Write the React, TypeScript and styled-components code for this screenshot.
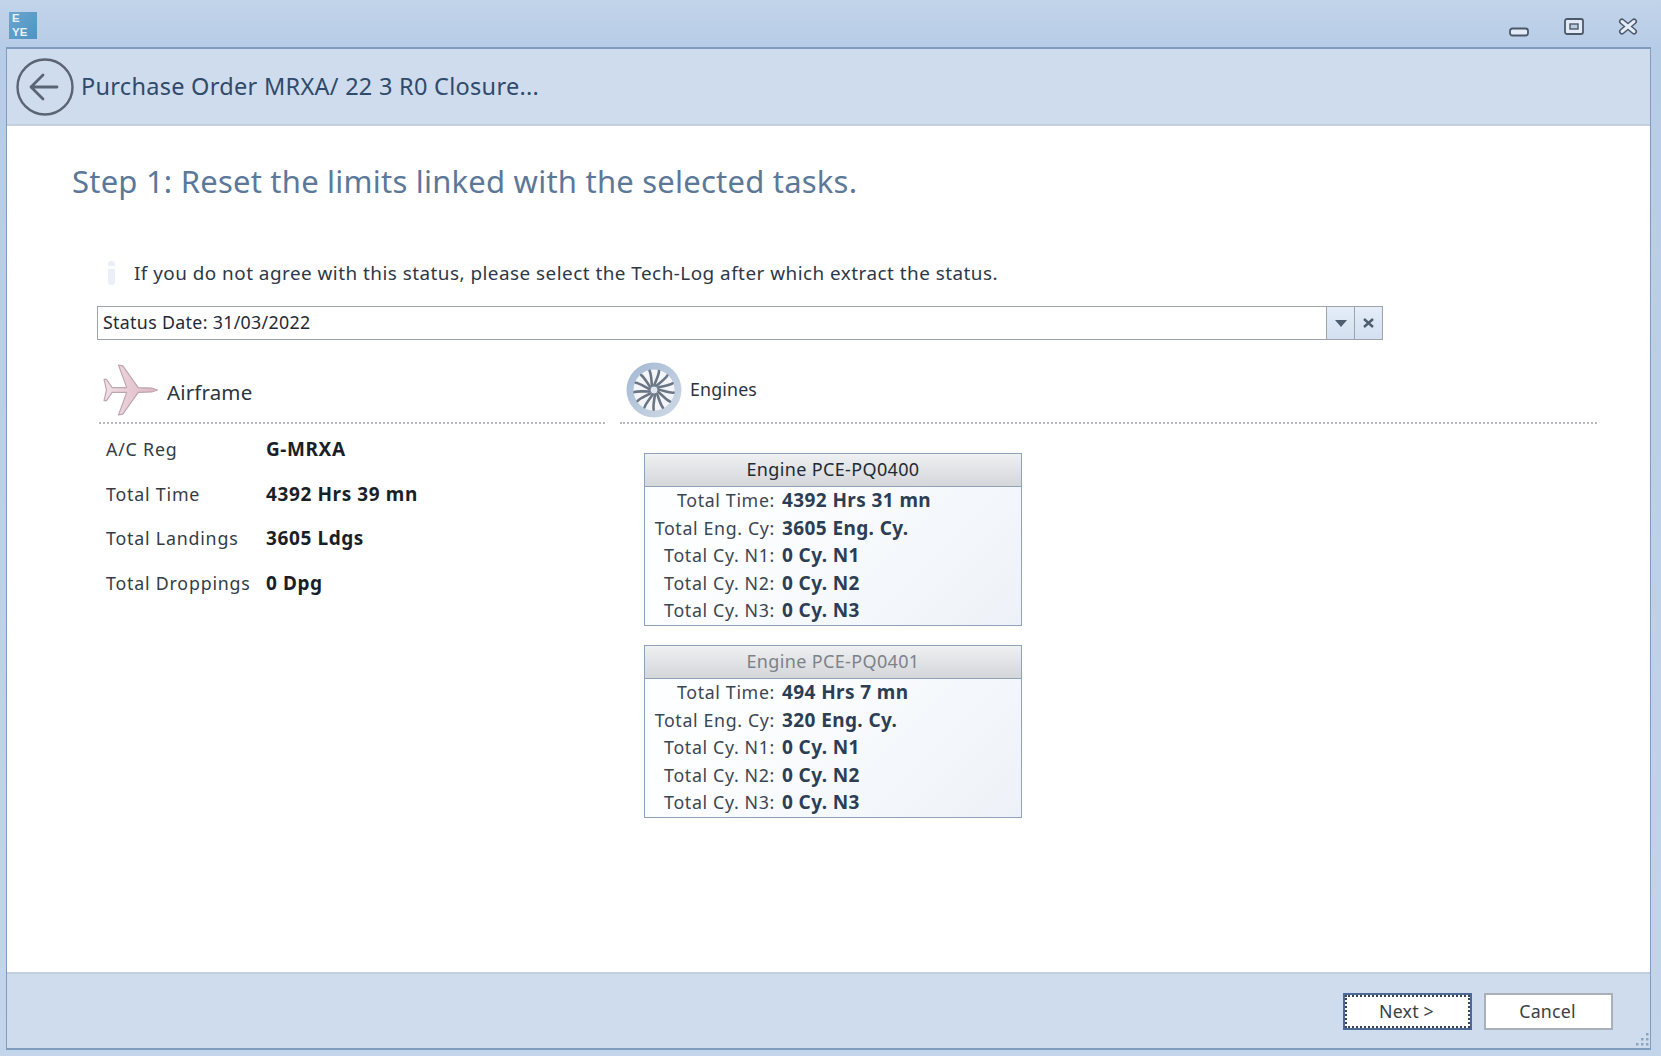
import React from "react";
import styled, { createGlobalStyle } from "styled-components";

const Global = createGlobalStyle`
  html, body { margin: 0; padding: 0; }
  body { font-family: "Noto Sans", "Open Sans", "Liberation Sans", sans-serif; background: #c0d3ea; }
`;

const Win = styled.div`
  width: 1661px; height: 1056px; display: flex; flex-direction: column; overflow: hidden;
  background: linear-gradient(180deg, #c2d4ea 0px, #b7cce7 47px, #c3d5eb 100%);
`;
const TitleBar = styled.div`
  height: 47px; flex: none; box-sizing: border-box; display: flex; align-items: flex-start; justify-content: space-between;
  padding: 12px 23px 0 9px;
`;
const Logo = styled.div`
  width: 28px; height: 27px; background: linear-gradient(135deg, #6aa6cf, #4f93c2); display: flex; flex-direction: column;
  color: #e6f2f9; font-family: "Liberation Sans", sans-serif; font-size: 11.5px; font-weight: 700; line-height: 13.5px; padding-left: 3px; box-sizing: border-box;
`;
const Controls = styled.div`
  display: flex; align-items: center; gap: 34.5px; height: 24px; padding-top: 2px;
`;
const Frame = styled.div`
  flex: none; margin: 0 10px 0 6px; height: 1003px; box-sizing: border-box; border: 2px solid #7f9bbd; border-right-width: 1px; border-left-width: 1px; display: flex; flex-direction: column;
`;
const Header = styled.div`
  height: 77px; flex: none; box-sizing: border-box; background: #cfdcee; border-bottom: 2px solid #c3cfdd;
  display: flex; align-items: center; padding-left: 9px; gap: 7px;
`;
const HeaderTitle = styled.span`
  font-size: 23.5px; color: #2f4a6b; letter-spacing: 0.28px; position: relative; top: -1px;
`;
const Content = styled.div`
  flex: 1; background: #fff; padding: 0 0 0 65px; min-height: 0; display: flex; flex-direction: column;
`;
const Step = styled.h1`
  margin: 30px 0 0 0; font-size: 31px; line-height: 50px; font-weight: 400; color: #5c7899; letter-spacing: 0.22px;
`;
const Info = styled.div`
  display: flex; align-items: center; margin: 52px 0 0 36px; height: 30px; gap: 19px;
`;
const InfoMark = styled.div`
  width: 7px; height: 24px; border-radius: 4px; background: linear-gradient(180deg, #eceff7 0 22%, #fff 22% 32%, #eceff7 32% 100%);
`;
const InfoText = styled.span`
  font-size: 18.9px; color: #2c3848; letter-spacing: 0.47px;
`;
const Combo = styled.div`
  margin: 18px 0 0 25px; width: 1286px; height: 34px; box-sizing: border-box; border: 1.5px solid #9ea4ab; display: flex; align-items: stretch;
`;
const ComboValue = styled.div`
  flex: 1; font-size: 17.8px; color: #1f2a36; padding-left: 5px; line-height: 30px; letter-spacing: 0.32px;
`;
const ComboBtn = styled.div`
  width: 27px; flex: none; border-left: 1.5px solid #9ea4ab; background: linear-gradient(180deg, #e4edf8, #d3e0f0);
  display: flex; align-items: center; justify-content: center;
`;
const Columns = styled.div`
  display: flex; margin: 17px 0 0 27px; gap: 15px; align-items: flex-start;
`;
const LeftCol = styled.div` width: 506px; flex: none; `;
const RightCol = styled.div` width: 977px; flex: none; `;
const SecHead = styled.div<{ $gap: number; $pad: number }>`
  height: 67px; box-sizing: border-box; border-bottom: 2px dotted #b5b9bd; display: flex; align-items: center;
  gap: ${p => p.$gap}px; padding-left: ${p => p.$pad}px;
`;
const SecTitle = styled.span<{ $size: number; $lift: number }>`
  font-size: ${p => p.$size}px; color: #2c3440; position: relative; top: ${p => p.$lift}px; letter-spacing: 0.15px;
`;
const Stats = styled.div`
  display: grid; grid-template-columns: 160px 1fr; row-gap: 0; padding: 3px 0 0 7px;
`;
const StatLabel = styled.div`
  font-size: 17.8px; line-height: 44.7px; color: #333c47; letter-spacing: 0.8px; white-space: nowrap;
`;
const StatValue = styled.div`
  font-size: 19px; line-height: 44.7px; color: #1a1f27; font-weight: 700; letter-spacing: 0.6px;
`;
const Cards = styled.div`
  display: flex; flex-direction: column; gap: 19px; padding: 29px 0 0 24px;
`;
const Card = styled.div`
  width: 378px; height: 173px; box-sizing: border-box; border: 1.5px solid #8fa3b8;
  background: linear-gradient(135deg, #fdfeff 30%, #edf2f8 100%);
`;
const CardHead = styled.div<{ $dim?: boolean }>`
  height: 33px; box-sizing: border-box; border-bottom: 1.5px solid #8fa3b8; background: linear-gradient(180deg, #eff0f2, #d4d6da);
  text-align: center; font-size: 18px; line-height: 31px; letter-spacing: 0.35px; color: ${p => (p.$dim ? "#7d8288" : "#222a33")};
`;
const CardBody = styled.div`
  display: grid; grid-template-columns: 130px 1fr; column-gap: 7px;
`;
const CardLabel = styled.div`
  text-align: right; font-size: 17.8px; line-height: 27.5px; color: #3b4653; letter-spacing: 0.65px; white-space: nowrap;
`;
const CardValue = styled.div`
  font-size: 19px; line-height: 27.5px; font-weight: 700; color: #2c3e55; white-space: nowrap; letter-spacing: 0.4px;
`;
const Footer = styled.div`
  height: 76px; flex: none; box-sizing: border-box; background: #cfdcee; border-top: 2px solid #c3cfdd;
  display: flex; justify-content: flex-end; align-items: center; gap: 12px; padding: 0 37px 0 0; position: relative;
`;
const Btn = styled.div<{ $primary?: boolean }>`
  width: 129px; height: 37px; box-sizing: border-box; background: #fff; text-align: center; font-size: 17.8px; color: #3a4047; letter-spacing: 0.2px;
  line-height: 33px; padding-right: 2px; border: ${p => (p.$primary ? "2px solid #4c6a95" : "2px solid #a9b0b8")};
  outline: ${p => (p.$primary ? "2px dotted #3a4658" : "none")}; outline-offset: ${p => (p.$primary ? "-4px" : "0")};
`;
const Grip = styled.svg` position: absolute; right: 0; bottom: 0; `;

const Plane = () => (
  <svg width="57" height="52" viewBox="0 0 58 54">
    <defs>
      <linearGradient id="pl" x1="0" y1="0" x2="1" y2="0">
        <stop offset="0" stopColor="#f1dfe5" />
        <stop offset="1" stopColor="#dcb4c2" />
      </linearGradient>
    </defs>
    <path
      d="M56 27 L50 25 L36 24.5 L20 2 L15.5 1 L24 24.5 L9 24.5 L3 16 L0.5 16 L3 27 L0.5 38 L3 38 L9 29.5 L24 29.5 L15.5 53 L20 52 L36 29.5 L50 29 Z"
      fill="url(#pl)" stroke="#bfa5b0" strokeWidth="1.2" strokeLinejoin="round"
    />
  </svg>
);

const blades = Array.from({ length: 13 }, (_, i) => (i * 360) / 13);
const Fan = () => (
  <svg width="56" height="56" viewBox="0 0 56 56">
    <defs>
      <linearGradient id="ring" x1="0" y1="0" x2="1" y2="1">
        <stop offset="0" stopColor="#a3b8d3" />
        <stop offset="1" stopColor="#d0dae6" />
      </linearGradient>
    </defs>
    <circle cx="28" cy="28" r="27.5" fill="url(#ring)" />
    <circle cx="28" cy="28" r="20.5" fill="#f3f5f9" />
    {blades.map(a => (
      <path key={a} d="M28 24 C30 18 33 13 33 9" fill="none" stroke="#6a7585" strokeWidth="2.6" strokeLinecap="round" transform={`rotate(${a} 28 28)`} />
    ))}
    <circle cx="28" cy="28" r="4" fill="#dfe6ef" stroke="#7b8695" strokeWidth="1" />
  </svg>
);

const BackIcon = () => (
  <svg width="58" height="58" viewBox="0 0 58 58">
    <circle cx="29" cy="29" r="27.5" fill="none" stroke="#5a6472" strokeWidth="2.4" />
    <path d="M15 29 H41 M27 17 L15 29 L27 41" fill="none" stroke="#5a6472" strokeWidth="2.8" strokeLinecap="round" strokeLinejoin="round" />
  </svg>
);

const MinIcon = () => (
  <svg width="20" height="10" viewBox="0 0 20 10" style={{ marginTop: 11 }}>
    <rect x="1" y="1.5" width="18" height="7" rx="2.5" fill="#e3ebf6" stroke="#4c596b" strokeWidth="1.8" />
  </svg>
);
const MaxIcon = () => (
  <svg width="20" height="17" viewBox="0 0 20 17">
    <rect x="1" y="1" width="18" height="15" rx="2" fill="#e3ebf6" stroke="#4c596b" strokeWidth="1.8" />
    <rect x="6" y="6" width="8" height="5" fill="#bccde2" stroke="#4c596b" strokeWidth="1.4" />
  </svg>
);
const CloseIcon = () => (
  <svg width="20" height="17" viewBox="0 0 20 17">
    <path d="M4 3.5 L16 13.5 M16 3.5 L4 13.5" stroke="#4c596b" strokeWidth="6" strokeLinecap="round" />
    <path d="M4 3.5 L16 13.5 M16 3.5 L4 13.5" stroke="#e6edf7" strokeWidth="3" strokeLinecap="round" />
  </svg>
);

type Row = [string, string];
const stats: Row[] = [
  ["A/C Reg", "G-MRXA"],
  ["Total Time", "4392 Hrs 39 mn"],
  ["Total Landings", "3605 Ldgs"],
  ["Total Droppings", "0 Dpg"],
];
const n: Row[] = [
  ["Total Cy. N1:", "0 Cy. N1"],
  ["Total Cy. N2:", "0 Cy. N2"],
  ["Total Cy. N3:", "0 Cy. N3"],
];
const engines: { name: string; dim?: boolean; rows: Row[] }[] = [
  { name: "Engine PCE-PQ0400", rows: [["Total Time:", "4392 Hrs 31 mn"], ["Total Eng. Cy:", "3605 Eng. Cy."], ...n] },
  { name: "Engine PCE-PQ0401", dim: true, rows: [["Total Time:", "494 Hrs 7 mn"], ["Total Eng. Cy:", "320 Eng. Cy."], ...n] },
];

export default function App() {
  return (
    <Win>
      <Global />
      <TitleBar>
        <Logo><span>E</span><span>YE</span></Logo>
        <Controls>
          <MinIcon />
          <MaxIcon />
          <CloseIcon />
        </Controls>
      </TitleBar>
      <Frame>
        <Header>
          <BackIcon />
          <HeaderTitle>Purchase Order MRXA/ 22 3 R0 Closure...</HeaderTitle>
        </Header>
        <Content>
          <Step>Step 1: Reset the limits linked with the selected tasks.</Step>
          <Info>
            <InfoMark />
            <InfoText>If you do not agree with this status, please select the Tech-Log after which extract the status.</InfoText>
          </Info>
          <Combo>
            <ComboValue>Status Date: 31/03/2022</ComboValue>
            <ComboBtn>
              <svg width="12" height="7" viewBox="0 0 12 7"><path d="M0 0 H12 L6 7 Z" fill="#4f5d70" /></svg>
            </ComboBtn>
            <ComboBtn>
              <svg width="11" height="10" viewBox="0 0 11 10"><path d="M1 1 L10 9 M10 1 L1 9" stroke="#4f5d70" strokeWidth="2.4" /></svg>
            </ComboBtn>
          </Combo>
          <Columns>
            <LeftCol>
              <SecHead $gap={7} $pad={4}>
                <Plane />
                <SecTitle $size={20.5} $lift={2}>Airframe</SecTitle>
              </SecHead>
              <Stats>
                {stats.map(([l, v]) => (
                  <React.Fragment key={l}>
                    <StatLabel>{l}</StatLabel>
                    <StatValue>{v}</StatValue>
                  </React.Fragment>
                ))}
              </Stats>
            </LeftCol>
            <RightCol>
              <SecHead $gap={8} $pad={6}>
                <Fan />
                <SecTitle $size={17.8} $lift={-1}>Engines</SecTitle>
              </SecHead>
              <Cards>
                {engines.map(e => (
                  <Card key={e.name}>
                    <CardHead $dim={e.dim}>{e.name}</CardHead>
                    <CardBody>
                      {e.rows.map(([l, v]) => (
                        <React.Fragment key={l}>
                          <CardLabel>{l}</CardLabel>
                          <CardValue>{v}</CardValue>
                        </React.Fragment>
                      ))}
                    </CardBody>
                  </Card>
                ))}
              </Cards>
            </RightCol>
          </Columns>
        </Content>
        <Footer>
          <Btn $primary>Next &gt;</Btn>
          <Btn>Cancel</Btn>
          <Grip width="18" height="18" viewBox="0 0 18 18">
            {[[14, 3], [9, 8], [14, 8], [4, 13], [9, 13], [14, 13]].map(([x, y]) => (
              <rect key={`${x}-${y}`} x={x} y={y} width="2.5" height="2.5" fill="#8ea3bd" />
            ))}
          </Grip>
        </Footer>
      </Frame>
    </Win>
  );
}
